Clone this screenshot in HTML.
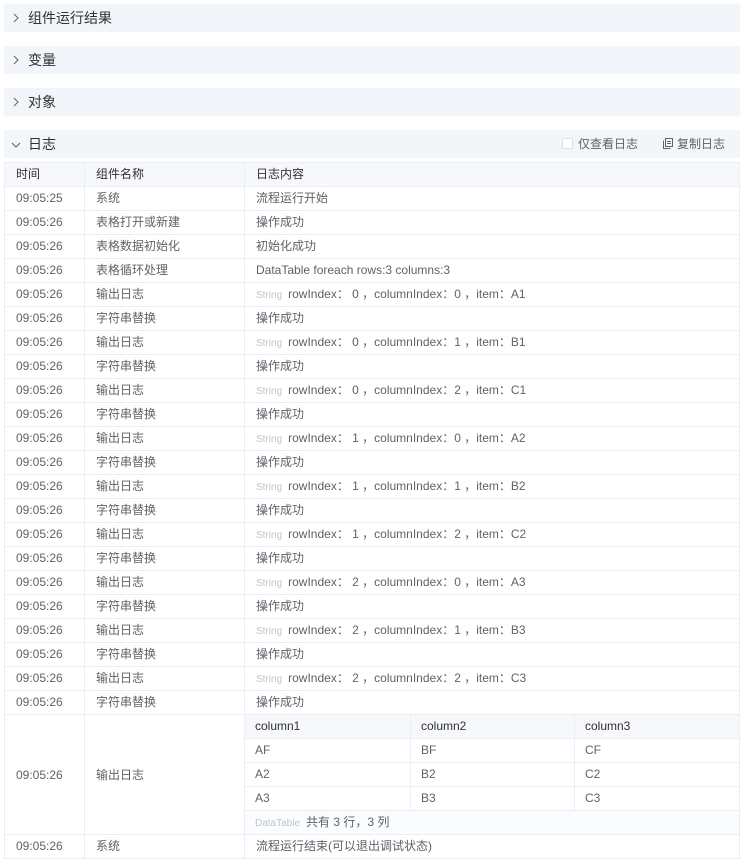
<!DOCTYPE html>
<html><head><meta charset="utf-8"><style>
*{box-sizing:border-box;margin:0;padding:0}
body{width:744px;height:864px;background:#fff;font-family:"Liberation Sans","Noto Sans CJK SC",sans-serif;color:#606266;font-size:12px;position:relative;overflow:hidden}
.h{position:absolute;left:4px;width:736px;height:28px;background:#f2f5fa;color:#303133;font-size:14px;line-height:28px;padding-left:24px}
.h svg{position:absolute;left:8px;top:9px}
.t{position:absolute;left:4px;top:162px;width:736px}
.row{display:flex;height:24px;border-bottom:1px solid #ebeef5}
.row>div{height:100%;line-height:23px;padding-left:11px;white-space:nowrap;overflow:hidden;border-right:1px solid #ebeef5}
.row>div:first-child{border-left:1px solid #ebeef5;width:81px}
.row>div:nth-child(2){width:160px}
.row>div:nth-child(3){width:495px}
.top{border-top:1px solid #ebeef5;height:25px}
.th>div{background:#f7f8fa;color:#303133}
.s{color:#c0c4cc;font-size:10px;margin-right:6px}
.big{height:120px}
.big>div:nth-child(1),.big>div:nth-child(2){line-height:120px}
.big>div:nth-child(3){padding:0}
.ir{display:flex;height:24px;border-bottom:1px solid #ebeef5}
.ir>div{line-height:23px;padding-left:10px;border-right:1px solid #ebeef5}
.ir>div:nth-child(1){width:166px}.ir>div:nth-child(2){width:164px}.ir>div:nth-child(3){width:164px;border-right:none}
.ih>div{background:#f7f8fa;color:#303133}
.ft{height:24px;line-height:23px;padding-left:10px;background:#fbfcfd}
.r{position:absolute;top:130px;height:28px;line-height:28px;font-size:12px;color:#606266}
</style></head><body>
<div class="h" style="top:4px"><svg width="8" height="10" viewBox="0 0 8 10"><path d="M2 1l4 4-4 4" fill="none" stroke="#606266" stroke-width="1"/></svg>组件运行结果</div>
<div class="h" style="top:46px"><svg width="8" height="10" viewBox="0 0 8 10"><path d="M2 1l4 4-4 4" fill="none" stroke="#606266" stroke-width="1"/></svg>变量</div>
<div class="h" style="top:88px"><svg width="8" height="10" viewBox="0 0 8 10"><path d="M2 1l4 4-4 4" fill="none" stroke="#606266" stroke-width="1"/></svg>对象</div>
<div class="h" style="top:130px"><svg width="10" height="8" viewBox="0 0 10 8" style="top:11px;left:7px"><path d="M1 2l4 4 4-4" fill="none" stroke="#606266" stroke-width="1"/></svg>日志</div>
<div class="r" style="left:562px"><span style="display:inline-block;width:11px;height:11px;border:1px solid #dcdfe6;border-radius:2px;vertical-align:-1px;margin-right:5px;background:#fff"></span>仅查看日志</div>
<div class="r" style="left:663px"><svg width="10" height="11" viewBox="0 0 10 11" style="vertical-align:-1px;margin-right:4px"><rect x="2.5" y="0.5" width="7" height="8" fill="none" stroke="#606266"/><path d="M0.5 2.5v8h7" fill="none" stroke="#606266"/><path d="M4 3.5h4M4 5.5h4" stroke="#606266"/></svg>复制日志</div>
<div class="t">
<div class="row th top"><div>时间</div><div>组件名称</div><div>日志内容</div></div>
<div class="row"><div>09:05:25</div><div>系统</div><div>流程运行开始</div></div>
<div class="row"><div>09:05:26</div><div>表格打开或新建</div><div>操作成功</div></div>
<div class="row"><div>09:05:26</div><div>表格数据初始化</div><div>初始化成功</div></div>
<div class="row"><div>09:05:26</div><div>表格循环处理</div><div>DataTable foreach rows:3 columns:3</div></div>
<div class="row"><div>09:05:26</div><div>输出日志</div><div><span class="s">String</span>rowIndex： 0 ，columnIndex：0 ，item：A1</div></div>
<div class="row"><div>09:05:26</div><div>字符串替换</div><div>操作成功</div></div>
<div class="row"><div>09:05:26</div><div>输出日志</div><div><span class="s">String</span>rowIndex： 0 ，columnIndex：1 ，item：B1</div></div>
<div class="row"><div>09:05:26</div><div>字符串替换</div><div>操作成功</div></div>
<div class="row"><div>09:05:26</div><div>输出日志</div><div><span class="s">String</span>rowIndex： 0 ，columnIndex：2 ，item：C1</div></div>
<div class="row"><div>09:05:26</div><div>字符串替换</div><div>操作成功</div></div>
<div class="row"><div>09:05:26</div><div>输出日志</div><div><span class="s">String</span>rowIndex： 1 ，columnIndex：0 ，item：A2</div></div>
<div class="row"><div>09:05:26</div><div>字符串替换</div><div>操作成功</div></div>
<div class="row"><div>09:05:26</div><div>输出日志</div><div><span class="s">String</span>rowIndex： 1 ，columnIndex：1 ，item：B2</div></div>
<div class="row"><div>09:05:26</div><div>字符串替换</div><div>操作成功</div></div>
<div class="row"><div>09:05:26</div><div>输出日志</div><div><span class="s">String</span>rowIndex： 1 ，columnIndex：2 ，item：C2</div></div>
<div class="row"><div>09:05:26</div><div>字符串替换</div><div>操作成功</div></div>
<div class="row"><div>09:05:26</div><div>输出日志</div><div><span class="s">String</span>rowIndex： 2 ，columnIndex：0 ，item：A3</div></div>
<div class="row"><div>09:05:26</div><div>字符串替换</div><div>操作成功</div></div>
<div class="row"><div>09:05:26</div><div>输出日志</div><div><span class="s">String</span>rowIndex： 2 ，columnIndex：1 ，item：B3</div></div>
<div class="row"><div>09:05:26</div><div>字符串替换</div><div>操作成功</div></div>
<div class="row"><div>09:05:26</div><div>输出日志</div><div><span class="s">String</span>rowIndex： 2 ，columnIndex：2 ，item：C3</div></div>
<div class="row"><div>09:05:26</div><div>字符串替换</div><div>操作成功</div></div>
<div class="row big"><div>09:05:26</div><div>输出日志</div><div>
<div class="ir ih"><div>column1</div><div>column2</div><div>column3</div></div>
<div class="ir"><div>AF</div><div>BF</div><div>CF</div></div>
<div class="ir"><div>A2</div><div>B2</div><div>C2</div></div>
<div class="ir"><div>A3</div><div>B3</div><div>C3</div></div>
<div class="ft"><span class="s">DataTable</span>共有 3 行，3 列</div>
</div></div>
<div class="row"><div>09:05:26</div><div>系统</div><div>流程运行结束(可以退出调试状态)</div></div>
</div>
</body></html>
